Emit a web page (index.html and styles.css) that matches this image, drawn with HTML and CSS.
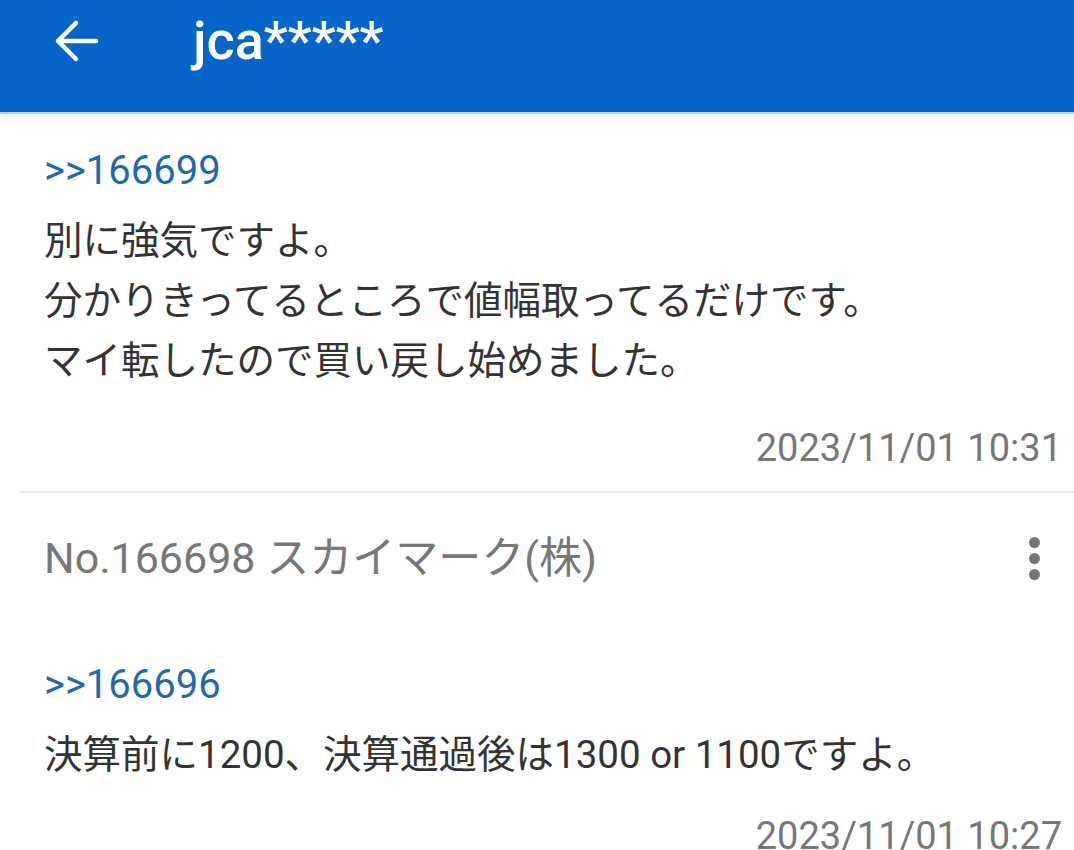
FILE: index.html
```html
<!DOCTYPE html>
<html lang="ja">
<head>
  <meta charset="UTF-8" />
  <meta name="viewport" content="width=device-width, initial-scale=1.0"/>
  <title>jca*****</title>
  <link rel="stylesheet" href="styles.css">
</head>
<body>
  <header class="app-bar">
    <button class="back-btn" aria-label="戻る">
      <svg width="46" height="44" viewBox="0 0 46 44">
        <path d="M43 22H5M23 4L5 22l18 18" fill="none" stroke="#fff" stroke-width="4.5" stroke-linecap="round" stroke-linejoin="round"/>
      </svg>
    </button>
    <h1 class="title">jca*****</h1>
  </header>

  <div class="thread">
    <div class="post">
      <div class="reply-to">&gt;&gt;166699</div>
      <div class="body">
        別に強気ですよ。<br>
        分かりきってるところで値幅取ってるだけです。<br>
        マイ転したので買い戻し始めました。
      </div>
      <div class="time">2023/11/01 10:31</div>
    </div>

    <div class="post">
      <div class="post-head">
        <span class="post-no">No.166698 スカイマーク(株)</span>
        <span class="kebab"><i></i><i></i><i></i></span>
      </div>
      <div class="reply-to">&gt;&gt;166696</div>
      <div class="body">決算前に1200、決算通過後は1300 or 1100ですよ。</div>
      <div class="time">2023/11/01 10:27</div>
    </div>
  </div>
</body>
</html>
```

FILE: styles.css
```css
body {
  font-family: Roboto, "Noto Sans CJK JP", sans-serif;
  background-color: #ffffff;
  margin: 0;
  padding: 0;
  overflow: hidden;
}

.app-bar {
  display: flex;
  align-items: center;
  height: 114px;
  padding: 0 0 30px 0;
  box-sizing: border-box;
  background-color: #0665c9;
  border-bottom: 2px solid #b9d5f2;
  box-shadow: 0 3px 6px rgba(0, 0, 0, 0.06);
}

.back-btn {
  background: none;
  border: none;
  padding: 0;
  margin-left: 53px;
  width: 46px;
  height: 44px;
}

.title {
  margin: 0 0 0 94px;
  color: #ffffff;
  font-size: 54px;
  font-weight: 500;
  line-height: 60px;
}

.post {
  padding: 0 12px 0 44px;
}

.post:first-child {
  padding-top: 27px;
  padding-bottom: 13px;
  border-bottom: 2px solid #e8e8e8;
  margin-left: 20px;
  padding-left: 24px;
}

.post-head {
  display: flex;
  justify-content: space-between;
  align-items: center;
  margin-top: 35px;
  height: 60px;
}

.post-no {
  font-size: 43px;
  color: #777777;
  line-height: 60px;
}

.kebab {
  display: flex;
  flex-direction: column;
  gap: 5px;
  margin-right: 22px;
}

.kebab i {
  display: block;
  width: 11px;
  height: 11px;
  border-radius: 50%;
  background-color: #757575;
}

.reply-to {
  font-size: 40px;
  line-height: 60px;
  color: #1f6aab;
}

.post-head + .reply-to {
  margin-top: 67px;
}

.body {
  margin-top: 10px;
  font-size: 38.5px;
  line-height: 60px;
  color: #333333;
}

.time {
  margin-top: 27px;
  text-align: right;
  font-size: 38px;
  line-height: 60px;
  color: #777777;
}

.post:last-child .time {
  margin-top: 21px;
}
```
